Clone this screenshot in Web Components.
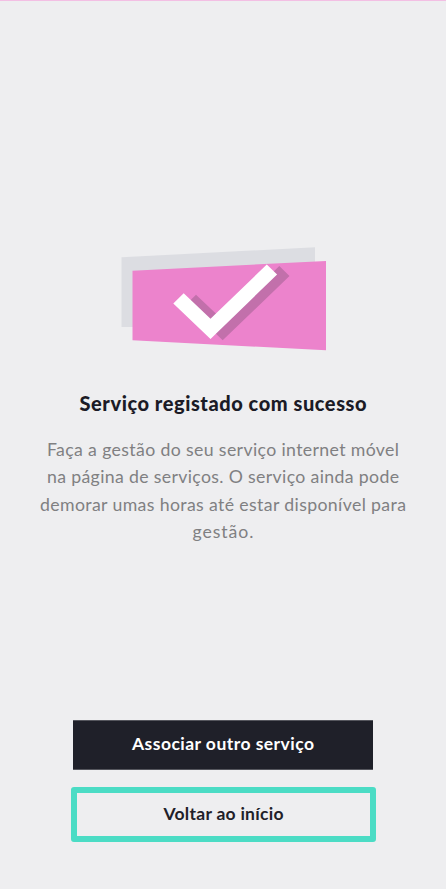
<!DOCTYPE html>
<html lang="pt">
<head>
<meta charset="utf-8">
<title>Serviço registado</title>
<style>
html,body{margin:0;height:100%;background:#eeeef0}
body{font-family:Lato,"Open Sans",sans-serif;overflow:hidden}
</style>
</head>
<body>
<success-page>
  <success-mark></success-mark>
  <fit-line slot="title" width="287">Serviço registado com sucesso</fit-line>
  <fit-line slot="text" width="352">Faça a gestão do seu serviço internet móvel</fit-line>
  <fit-line slot="text" width="352">na página de serviços. O serviço ainda pode</fit-line>
  <fit-line slot="text" width="366">demorar umas horas até estar disponível para</fit-line>
  <fit-line slot="text" width="61">gestão.</fit-line>
  <action-button slot="actions" kind="primary"><fit-line width="182">Associar outro serviço</fit-line></action-button>
  <action-button slot="actions" kind="outline"><fit-line width="120">Voltar ao início</fit-line></action-button>
</success-page>
<script>
const attach = (el, html) => { el.attachShadow({mode:'open'}).innerHTML = html; };

customElements.define('success-mark', class extends HTMLElement {
  connectedCallback() {
    attach(this, `<style>:host{display:block;width:206px;height:105px}svg{display:block}</style>
<svg width="206" height="105" viewBox="121 246 206 105" aria-hidden="true">
<path fill="#dcdde2" d="M121.5 257.3 315 247.2V327H121.5Z"/>
<path fill="#ec83cc" d="M132.5 270.7 326 261V350.3L132.5 340.3Z"/>
<path fill="#c270ab" d="M185.8 304.8 196 294.8 223 320.3 279.3 266 289.5 276 222.7 340.3Z"/>
<path fill="#fff" d="M173.3 303.5 183.7 293.3 210.5 318.7 266.8 264.5 277.1 274.5 210.5 339Z"/>
</svg>`);
  }
});

customElements.define('action-button', class extends HTMLElement {
  connectedCallback() {
    attach(this, `<style>
:host{display:block}
button{display:block;box-sizing:border-box;width:100%;margin:0;padding:0;border:0;background:none;font:inherit;color:#1f2029;cursor:pointer}
:host([kind=primary]){width:300px;margin:0 auto}
:host([kind=primary]) button{height:50px;background:#1f2029;color:#fff;border-top:1px solid #55565d;border-bottom:1px solid #55565d;padding-bottom:2px}
:host([kind=outline]){width:305px;margin:17px 0 0 -2px}
:host([kind=outline]) button{height:55px;border:6px solid #4bdcc5;border-radius:3px;padding-bottom:1px}
</style><button type="button"><slot></slot></button>`);
  }
});

customElements.define('success-page', class extends HTMLElement {
  connectedCallback() {
    attach(this, `<style>
:host{display:flex;flex-direction:column;align-items:center;box-sizing:border-box;height:889px;background:#eeeef0;border-top:1px solid #f3bfe4;padding-top:245px}
.mark{width:206px;margin-left:2px}
h1{margin:40px 0 0;font-size:20px;line-height:24px;font-weight:900;color:#1b1b26}
.text{margin-top:21px;font-size:17.7px;line-height:27.3px;color:#808082}
.actions{width:300px;margin-top:auto;padding-bottom:47px;font-size:17.5px;line-height:24px;font-weight:700}
</style>
<div class="mark"><slot></slot></div>
<h1><slot name="title"></slot></h1>
<div class="text"><slot name="text"></slot></div>
<div class="actions"><slot name="actions"></slot></div>`);
  }
});

/* One line of text, tracked to a given measure. Defined last, so that it
   measures with the font that its slot gives it. */
customElements.define('fit-line', class extends HTMLElement {
  connectedCallback() {
    attach(this, `<style>:host{display:block;white-space:nowrap;text-align:center}span{display:inline-block}</style><span><slot></slot></span>`);
    const span = this.shadowRoot.querySelector('span');
    const n = this.textContent.length;
    const natural = span.getBoundingClientRect().width;
    const gap = (Number(this.getAttribute('width')) - natural) / (n - 1);
    span.style.letterSpacing = gap + 'px';
    span.style.marginRight = -gap + 'px';
  }
});
</script>
</body>
</html>
